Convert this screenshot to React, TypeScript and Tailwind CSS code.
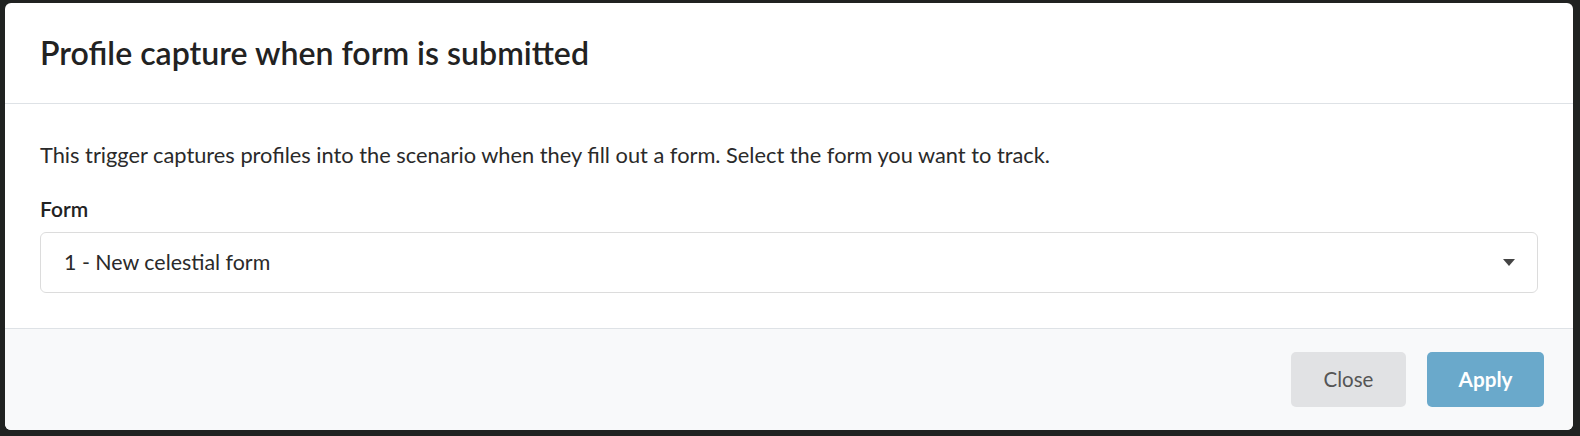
export default function App() {
  return (
    <div className="h-[436px] w-[1580px] bg-[#202221] pt-[3px] pl-[5px] font-['Lato',sans-serif]">
      <div className="flex h-[427px] w-[1568px] flex-col overflow-hidden rounded-[6px] bg-white">
        {/* Header */}
        <div className="flex h-[101px] items-center border-b border-[#dee2e6] px-[35px]">
          <h2 className="text-[32.1px] leading-[40px] font-semibold text-[#222]">Profile capture when form is submitted</h2>
        </div>

        {/* Body */}
        <div className="flex-1 px-[35px] pt-[37px]">
          <p className="text-[21.8px] leading-[27px] text-[#2a2a2a]">
            This trigger captures profiles into the scenario when they fill out a form. Select the form you want to track.
          </p>
          <label className="mt-[29px] block text-[21px] leading-[24px] font-semibold text-[#222]">Form</label>
          <div className="mt-[11px] flex h-[61px] items-center justify-between rounded-[6px] border border-[#dcdcdc] pr-[22px] pl-[23px]">
            <span className="text-[21.4px] text-[#2a2a2a]">1 - New celestial form</span>
            <svg width="12" height="7" viewBox="0 0 12 7" className="text-[#444]">
              <path d="M0 0h12L6 7z" fill="currentColor" />
            </svg>
          </div>
        </div>

        {/* Footer */}
        <div className="flex h-[102px] items-center justify-end gap-[21px] border-t border-[#dee2e6] bg-[#f8f9fa] pr-[29px]">
          <button className="h-[55px] w-[115px] rounded-[5px] bg-[#e1e2e4] text-[20.5px] text-[#555]">Close</button>
          <button className="h-[55px] w-[117px] rounded-[5px] bg-[#6aa9cb] text-[20.7px] font-bold text-white">Apply</button>
        </div>
      </div>
    </div>
  );
}
